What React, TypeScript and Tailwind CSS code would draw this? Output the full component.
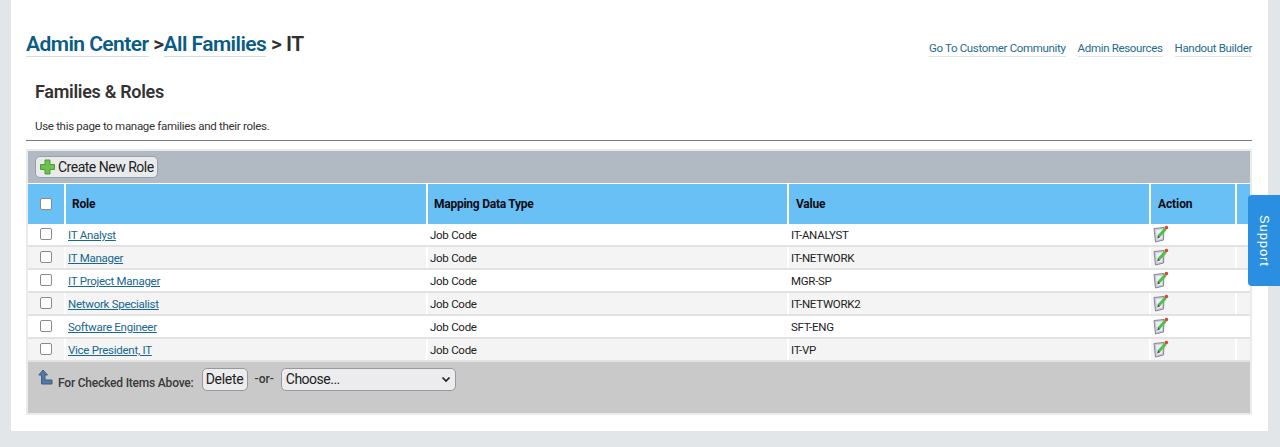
const rows = [
  ["IT Analyst", "IT-ANALYST"],
  ["IT Manager", "IT-NETWORK"],
  ["IT Project Manager", "MGR-SP"],
  ["Network Specialist", "IT-NETWORK2"],
  ["Software Engineer", "SFT-ENG"],
  ["Vice President, IT", "IT-VP"],
];

const cols = "grid grid-cols-[36px_360px_359px_360px_84px_13px] gap-x-[2px]";

function EditIcon() {
  return (
    <svg width="16" height="18" viewBox="0 0 16 18" className="block -mt-[2px]">
      <path d="M1 3.5 L11 2.5 L10.5 15 L2.5 17 Z" fill="#c9cbd6" stroke="#85879a" strokeWidth="1" />
      <path d="M3 5 L9.5 4.5 L9 13.5 L4 14.8 Z" fill="#eeeef2" />
      <path d="M5.5 11.5 L12.5 4" stroke="#4fc04a" strokeWidth="3" />
      <path d="M4.2 13.5 L5 10.5 L7 12.2 Z" fill="#444" />
      <circle cx="13.4" cy="2.6" r="1.8" fill="#d9452f" />
    </svg>
  );
}

function Box({ className = "" }: { className?: string }) {
  return <span className={`block w-[12px] h-[12px] rounded-[2px] border border-[#8a8a8a] bg-white ${className}`} />;
}

export default function App() {
  return (
    <div className="relative h-[447px] bg-[#e3e6e9] overflow-hidden text-[#333] font-['Roboto','Noto_Sans',sans-serif]">
      <div className="ml-[11px] w-[1257px] h-[431px] bg-white pl-[15px] pr-[16px]">
        <div className="flex items-end justify-between h-[58px] pb-[1px]">
          <div className="text-[21px] leading-[26px] font-semibold tracking-[-0.55px] whitespace-nowrap text-[#2f2f2f]">
            <a className="text-[#0a5c85] border-b border-[#d3dde4]">Admin Center</a>
            <span> &gt;</span>
            <a className="text-[#0a5c85] border-b border-[#d3dde4]">All Families</a>
            <span> &gt; IT</span>
          </div>
          <div className="flex gap-x-[12px] text-[11.5px] leading-[15px] tracking-[-0.33px] text-[#1f6a8e] whitespace-nowrap">
            <a className="border-b border-[#dce5ea]">Go To Customer Community</a>
            <a className="border-b border-[#dce5ea]">Admin Resources</a>
            <a className="border-b border-[#dce5ea]">Handout Builder</a>
          </div>
        </div>
        <h1 className="pl-[9px] mt-[22px] text-[18px] leading-[24px] font-semibold tracking-[-0.3px] text-[#333]">Families &amp; Roles</h1>
        <p className="pl-[9px] mt-[14px] text-[11.5px] leading-[16px] tracking-[-0.3px] text-[#333]">Use this page to manage families and their roles.</p>
        <div className="mt-[6px] h-px bg-[#77797b]" />
        <div className="mt-[8px] h-[266px] border-2 border-[#e9ebec] flex flex-col">
          <div className="h-[32px] bg-[#b1bac3] flex items-center pl-[7px]">
            <button className="h-[22px] w-[123px] flex items-center gap-x-[3px] pl-[4px] rounded-[5px] border border-[#9a9fa6] bg-[#e9eaec] text-[14px] tracking-[-0.5px] text-[#222] whitespace-nowrap">
              <svg width="15" height="16" viewBox="0 0 15 16" className="shrink-0">
                <path d="M5 1 H10 V5.5 H14.5 V10.5 H10 V15 H5 V10.5 H0.5 V5.5 H5 Z" fill="#6cc24a" stroke="#4d9a38" strokeWidth="1" />
              </svg>
              Create New Role
            </button>
          </div>
          <div className={`${cols} h-[41px] pt-[1px] bg-white`}>
            <div className="bg-[#69c0f4] flex items-center justify-center pb-[1px]"><Box /></div>
            <div className="bg-[#69c0f4] flex items-center pl-[6px] text-[12px] font-bold tracking-[-0.25px] text-[#0c0c14]">Role</div>
            <div className="bg-[#69c0f4] flex items-center pl-[6px] text-[12px] font-bold tracking-[-0.25px] text-[#0c0c14]">Mapping Data Type</div>
            <div className="bg-[#69c0f4] flex items-center pl-[7px] text-[12px] font-bold tracking-[-0.25px] text-[#0c0c14]">Value</div>
            <div className="bg-[#69c0f4] flex items-center pl-[7px] text-[12px] font-bold tracking-[-0.1px] text-[#0c0c14]">Action</div>
            <div className="bg-[#69c0f4]" />
          </div>
          {rows.map(([role, value], i) => (
            <div key={role} className={`${cols} h-[23px] border-b-2 border-[#e2e2e2] text-[11.5px] tracking-[-0.27px] text-[#222] ${i % 2 ? "bg-[#f4f4f4]" : "bg-white"}`}>
              <div className="flex items-center justify-center"><Box className="-mt-[1px]" /></div>
              <div className="flex items-center pl-[2px] pt-[2px] border-l-2 -ml-[2px] border-white">
                <a className="underline text-[#17678f]">{role}</a>
              </div>
              <div className="flex items-center pl-[2px] pt-[2px] border-l-2 -ml-[2px] border-white">Job Code</div>
              <div className="flex items-center pl-[2px] pt-[2px] border-l-2 -ml-[2px] border-white">{value}</div>
              <div className="flex items-center pl-[2px] border-l-2 -ml-[2px] border-white"><EditIcon /></div>
              <div className="border-l-2 -ml-[2px] border-white" />
            </div>
          ))}
          <div className="flex-1 bg-[#c9c9c9] flex items-start pl-[10px] pt-[6px] whitespace-nowrap">
            <svg width="15" height="17" viewBox="0 0 15 17" className="mt-[1px] shrink-0">
              <path d="M5 1 L9.5 6 H7 V11 H14 V15 H3.5 V6 H0.8 Z" fill="#4f7aa5" stroke="#3f5f85" strokeWidth="1" />
            </svg>
            <span className="ml-[5px] mt-[7px] text-[12px] leading-[16px] font-medium tracking-[-0.2px] text-[#3a3a3a]">For Checked Items Above:</span>
            <button className="ml-[8px] w-[46px] h-[23px] rounded-[5px] border border-[#97999c] bg-[#ececee] text-[14px] tracking-[-0.3px] text-[#222]">Delete</button>
            <span className="ml-[7px] mt-[3px] text-[12px] leading-[16px] font-medium text-[#3a3a3a]">-or-</span>
            <div className="ml-[7px] w-[175px] h-[23px] rounded-[5px] border border-[#97999c] bg-[#ececee] flex items-center justify-between pl-[4px] pr-[4px] text-[14px] tracking-[-0.5px] text-[#222]">
              <span>Choose...</span>
              <svg width="10" height="7" viewBox="0 0 10 7"><path d="M1.5 1.5 L5 5 L8.5 1.5" fill="none" stroke="#222" strokeWidth="1.7" /></svg>
            </div>
          </div>
        </div>
      </div>
      <div className="absolute left-[1248px] top-[195px] w-[32px] h-[91px] rounded-l-[4px] bg-[#2a8fe0] flex items-center justify-center text-white text-[13px] tracking-[0.9px] font-['Liberation_Sans',sans-serif] [writing-mode:vertical-rl]">
        Support
      </div>
    </div>
  );
}
